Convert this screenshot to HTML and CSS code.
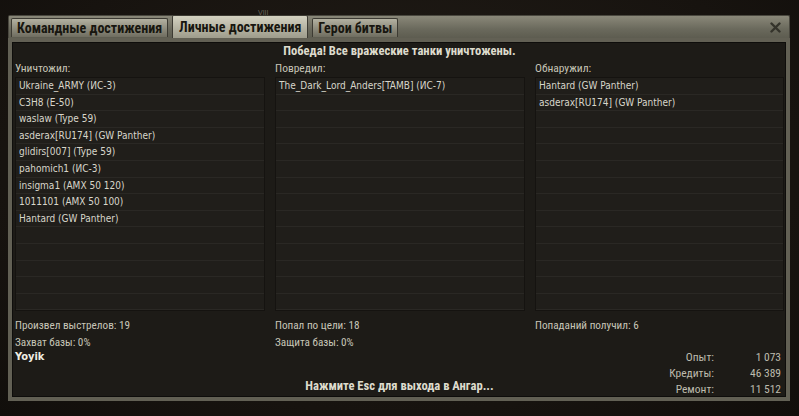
FILE: index.html
```html
<!DOCTYPE html>
<html lang="ru">
<head>
    <meta charset="UTF-8">
    <meta name="viewport" content="width=device-width, initial-scale=1.0">
    <title>Итоги боя</title>
    <link rel="stylesheet" href="styles.css">
</head>
<body>
    <div class="top-strip"><span class="tier">VIII</span></div>
    <div class="window">
        <div class="tabbar">
            <div class="tab">Командные достижения</div>
            <div class="tab active">Личные достижения</div>
            <div class="tab">Герои битвы</div>
            <div class="close">
                <svg width="11" height="11" viewBox="0 0 11 11"><path d="M1.5 1.5 L9.5 9.5 M9.5 1.5 L1.5 9.5" stroke="#34332b" stroke-width="2.4" stroke-linecap="round"/></svg>
            </div>
        </div>
        <div class="panel">
            <div class="heading">Победа! Все вражеские танки уничтожены.</div>
            <div class="columns">
                <div class="col">
                    <div class="label">Уничтожил:</div>
                    <div class="list">
                        <div class="row">Ukraine_ARMY (ИС-3)</div>
                        <div class="row">C3H8 (E-50)</div>
                        <div class="row">waslaw (Type 59)</div>
                        <div class="row">asderax[RU174] (GW Panther)</div>
                        <div class="row">glidirs[007] (Type 59)</div>
                        <div class="row">pahomich1 (ИС-3)</div>
                        <div class="row">insigma1 (AMX 50 120)</div>
                        <div class="row">1011101 (AMX 50 100)</div>
                        <div class="row">Hantard (GW Panther)</div>
                        <div class="row"></div>
                        <div class="row"></div>
                        <div class="row"></div>
                        <div class="row"></div>
                        <div class="row"></div>
                    </div>
                </div>
                <div class="col">
                    <div class="label">Повредил:</div>
                    <div class="list">
                        <div class="row">The_Dark_Lord_Anders[TAMB] (ИС-7)</div>
                        <div class="row"></div>
                        <div class="row"></div>
                        <div class="row"></div>
                        <div class="row"></div>
                        <div class="row"></div>
                        <div class="row"></div>
                        <div class="row"></div>
                        <div class="row"></div>
                        <div class="row"></div>
                        <div class="row"></div>
                        <div class="row"></div>
                        <div class="row"></div>
                        <div class="row"></div>
                    </div>
                </div>
                <div class="col">
                    <div class="label">Обнаружил:</div>
                    <div class="list">
                        <div class="row">Hantard (GW Panther)</div>
                        <div class="row">asderax[RU174] (GW Panther)</div>
                        <div class="row"></div>
                        <div class="row"></div>
                        <div class="row"></div>
                        <div class="row"></div>
                        <div class="row"></div>
                        <div class="row"></div>
                        <div class="row"></div>
                        <div class="row"></div>
                        <div class="row"></div>
                        <div class="row"></div>
                        <div class="row"></div>
                        <div class="row"></div>
                    </div>
                </div>
            </div>
            <div class="columns stats">
                <div class="col">
                    <div class="stat">Произвел выстрелов: 19</div>
                    <div class="stat">Захват базы: 0%</div>
                </div>
                <div class="col">
                    <div class="stat">Попал по цели: 18</div>
                    <div class="stat">Защита базы: 0%</div>
                </div>
                <div class="col">
                    <div class="stat">Попаданий получил: 6</div>
                </div>
            </div>
            <div class="footer">
                <div class="player">Yoyik</div>
                <div class="hint">Нажмите Esc для выхода в Ангар...</div>
                <div class="earnings">
                    <div class="earn-row"><span class="earn-label">Опыт:</span><span class="earn-value">1 073</span></div>
                    <div class="earn-row"><span class="earn-label">Кредиты:</span><span class="earn-value">46 389</span></div>
                    <div class="earn-row"><span class="earn-label">Ремонт:</span><span class="earn-value">11 512</span></div>
                </div>
            </div>
        </div>
    </div>
</body>
</html>
```

FILE: styles.css
```css
body {
    margin: 0;
    height: 416px;
    overflow: hidden;
    background: radial-gradient(ellipse at 50% 40%, #231e18 0%, #17130f 70%, #110e0b 100%);
    font-family: "DejaVu Sans Condensed", "DejaVu Sans", sans-serif;
}

.top-strip {
    height: 13px;
    padding-left: 258px;
    box-sizing: border-box;
}

.tier {
    font-family: "Liberation Sans", Arial, sans-serif;
    font-size: 7px;
    line-height: 11px;
    color: #6a655a;
}

.window {
    margin-left: 8px;
    width: 782px;
    height: 388px;
    box-sizing: border-box;
    display: flex;
    flex-direction: column;
}

.tabbar {
    height: 22px;
    margin-top: 2px;
    flex-shrink: 0;
    display: flex;
    align-items: flex-end;
    padding-left: 2px;
    background: linear-gradient(#8a8879, #6a695c 60%, #5d5c50);
    border: 1px solid #4a483f;
    border-bottom: none;
    border-radius: 2px 2px 0 0;
}

.tab {
    height: 19px;
    margin-right: 4px;
    margin-bottom: 1px;
    padding: 0 5px;
    box-sizing: border-box;
    font-family: "Roboto Condensed", "DejaVu Sans Condensed", sans-serif;
    font-weight: bold;
    font-size: 14px;
    line-height: 19px;
    color: #17160f;
    background: linear-gradient(#b3b1a1, #8d8b7c 55%, #6f6d60);
    border: 1px solid #3d3b33;
    border-bottom: none;
    border-radius: 2px 2px 0 0;
    white-space: nowrap;
}

.tab.active {
    height: 24px;
    margin-bottom: -1px;
    line-height: 23px;
    padding: 0 6px;
    background: linear-gradient(#d4d2c1, #b4b2a1 55%, #9c9a8a);
}

.close {
    margin-left: auto;
    align-self: center;
    width: 11px;
    height: 11px;
    margin-right: 8px;
}

.close svg {
    display: block;
}

.panel {
    flex: 1;
    display: flex;
    flex-direction: column;
    background: #1d1b17;
    border: 4px solid #626054;
    box-shadow: inset 0 0 0 1px #0e0d0b;
    padding: 0 2px 0 3px;
}

.heading {
    height: 18px;
    text-align: center;
    font-family: "Roboto Condensed", "DejaVu Sans Condensed", sans-serif;
    font-weight: bold;
    font-size: 12.6px;
    line-height: 18px;
    color: #dddbcd;
}

.columns {
    display: grid;
    grid-template-columns: 250px 250px 1fr;
    column-gap: 10px;
}

.label {
    height: 16px;
    font-family: "Roboto Condensed", "DejaVu Sans Condensed", sans-serif;
    font-size: 11.5px;
    line-height: 16px;
    color: #c6c4b6;
}

.list {
    margin-top: 1px;
    background: #201e1a;
    border: 1px solid #151310;
}

.row {
    height: 16.6px;
    box-sizing: border-box;
    padding-left: 3px;
    border-bottom: 1px solid #2a2824;
    font-size: 10px;
    line-height: 16px;
    color: #d8d6ca;
    white-space: nowrap;
}

.stats {
    margin-top: 6px;
}

.stat {
    height: 17px;
    font-family: "Roboto Condensed", "DejaVu Sans Condensed", sans-serif;
    font-size: 11.2px;
    line-height: 17px;
    color: #c8c6b8;
}

.footer {
    flex: 1;
    display: flex;
    align-items: flex-start;
}

.player {
    width: 220px;
    font-weight: bold;
    font-size: 11px;
    line-height: 12px;
    color: #f0eee2;
}

.hint {
    align-self: flex-end;
    flex: 1;
    text-align: center;
    margin-bottom: 3px;
    font-family: "Roboto Condensed", "DejaVu Sans Condensed", sans-serif;
    font-weight: bold;
    font-size: 12.6px;
    line-height: 16px;
    color: #dddbcd;
}

.earnings {
    width: 220px;
    margin-top: -2px;
    padding-right: 3px;
    box-sizing: border-box;
}

.earn-row {
    display: flex;
    justify-content: flex-end;
    height: 16px;
    font-family: "Roboto Condensed", "DejaVu Sans Condensed", sans-serif;
    font-size: 11.5px;
    line-height: 16px;
    color: #bebcae;
}

.earn-value {
    width: 67px;
    text-align: right;
}
```
